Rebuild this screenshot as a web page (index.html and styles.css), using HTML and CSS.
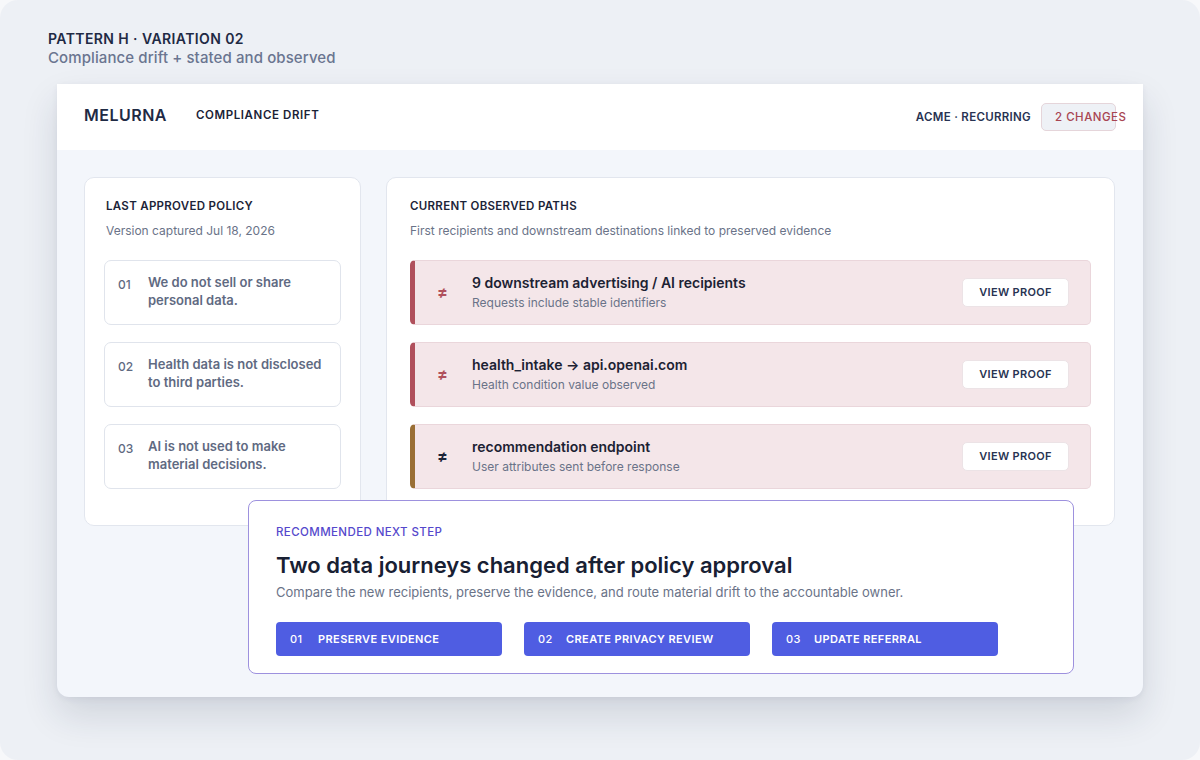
FILE: index.html
```html
<!DOCTYPE html>
<html lang="en">
<head>
<meta charset="utf-8">
<title>Compliance drift</title>
<link rel="stylesheet" href="styles.css">
</head>
<body>
<div class="canvas">
  <div class="intro">
    <div class="intro-title">PATTERN H · VARIATION 02</div>
    <div class="intro-sub">Compliance drift + stated and observed</div>
  </div>
  <div class="frame">
    <header class="topbar">
      <div class="brand">MELURNA</div>
      <div class="section">COMPLIANCE DRIFT</div>
      <div class="spacer"></div>
      <div class="account">ACME · RECURRING</div>
      <div class="badge">2 CHANGES</div>
    </header>
    <main class="body">
      <section class="card policy">
        <h2 class="card-title">LAST APPROVED POLICY</h2>
        <p class="card-sub">Version captured Jul 18, 2026</p>
        <div class="policy-list">
          <div class="policy-item"><span class="num">01</span><span class="ptext">We do not sell or share personal data.</span></div>
          <div class="policy-item"><span class="num">02</span><span class="ptext">Health data is not disclosed to third parties.</span></div>
          <div class="policy-item"><span class="num">03</span><span class="ptext">AI is not used to make material decisions.</span></div>
        </div>
      </section>
      <section class="card paths">
        <h2 class="card-title">CURRENT OBSERVED PATHS</h2>
        <p class="card-sub">First recipients and downstream destinations linked to preserved evidence</p>
        <div class="path-list">
          <div class="path red">
            <span class="neq">≠</span>
            <div class="path-text">
              <div class="path-title">9 downstream advertising / AI recipients</div>
              <div class="path-sub">Requests include stable identifiers</div>
            </div>
            <button class="proof">VIEW PROOF</button>
          </div>
          <div class="path red">
            <span class="neq">≠</span>
            <div class="path-text">
              <div class="path-title">health_intake → api.openai.com</div>
              <div class="path-sub">Health condition value observed</div>
            </div>
            <button class="proof">VIEW PROOF</button>
          </div>
          <div class="path amber">
            <span class="neq">≠</span>
            <div class="path-text">
              <div class="path-title">recommendation endpoint</div>
              <div class="path-sub">User attributes sent before response</div>
            </div>
            <button class="proof">VIEW PROOF</button>
          </div>
        </div>
      </section>
      <section class="next">
        <div class="next-label">RECOMMENDED NEXT STEP</div>
        <h1 class="next-title">Two data journeys changed after policy approval</h1>
        <p class="next-sub">Compare the new recipients, preserve the evidence, and route material drift to the accountable owner.</p>
        <div class="actions">
          <button class="action"><span class="anum">01</span>PRESERVE EVIDENCE</button>
          <button class="action"><span class="anum">02</span>CREATE PRIVACY REVIEW</button>
          <button class="action"><span class="anum">03</span>UPDATE REFERRAL</button>
        </div>
      </section>
    </main>
  </div>
</div>
</body>
</html>
```
FILE: styles.css
```css
* { box-sizing: border-box; }
html, body { margin: 0; padding: 0; }
body {
  background: #f7f8fa;
  font-family: Inter, "Noto Sans", "Liberation Sans", sans-serif;
  color: #1e2a44;
}
.canvas {
  width: 1200px;
  height: 760px;
  background: #edf0f5;
  border-radius: 18px;
  padding: 30px 57px 0 57px;
  overflow: hidden;
}
.intro { margin-left: -9px; }
.intro-title {
  font-size: 14px;
  font-weight: 600;
  letter-spacing: 0.4px;
  color: #1f2a44;
  line-height: 18px;
}
.intro-sub {
  font-size: 15px;
  font-weight: 500;
  letter-spacing: 0.1px;
  color: #6a7590;
  line-height: 20px;
}
.frame {
  margin-top: 16px;
  width: 1086px;
  height: 613px;
  background: #f3f6fb;
  border-radius: 2px 2px 12px 12px;
  box-shadow: 0 18px 36px rgba(30, 40, 70, 0.14), 0 2px 6px rgba(30, 40, 70, 0.06);
  display: flex;
  flex-direction: column;
}
.topbar {
  height: 66px;
  background: #ffffff;
  display: flex;
  align-items: center;
  padding: 0 27px;
}
.brand {
  font-size: 16px;
  font-weight: 600;
  letter-spacing: 0.5px;
  color: #1f2a44;
  margin-top: -4px;
}
.section {
  margin-left: 29px;
  font-size: 11.5px;
  font-weight: 600;
  letter-spacing: 0.6px;
  color: #1a2236;
  margin-top: -4px;
}
.spacer { flex: 1; }
.account {
  font-size: 11.5px;
  font-weight: 600;
  letter-spacing: 0.3px;
  color: #283352;
  margin-top: 0;
}
.badge {
  margin-left: 10px;
  margin-top: 0;
  width: 75px;
  height: 28px;
  background: #eef1f6;
  border: 1px solid #e5d5da;
  border-radius: 5px;
  padding-left: 13px;
  font-size: 11.5px;
  font-weight: 500;
  letter-spacing: 0.5px;
  line-height: 26px;
  color: #a84552;
  white-space: nowrap;
}
.body {
  position: relative;
  flex: 1;
  display: grid;
  grid-template-columns: 277px 729px;
  column-gap: 25px;
  align-items: start;
  padding: 27px 0 0 27px;
}
.card {
  background: #ffffff;
  border: 1px solid #e2e6ee;
  border-radius: 10px;
  height: 349px;
}
.policy { padding: 21px 19px 0 21px; }
.policy .policy-list { margin-left: -2px; }
.paths { padding: 21px 23px 0 23px; }
.card-title {
  margin: 0;
  font-size: 11.5px;
  font-weight: 600;
  letter-spacing: 0.3px;
  color: #1c2438;
  line-height: 14px;
}
.card-sub {
  margin: 10px 0 0 0;
  font-size: 12px;
  color: #6a7388;
  line-height: 15px;
}
.policy-list {
  margin-top: 22px;
  display: flex;
  flex-direction: column;
  gap: 17px;
}
.policy-item {
  height: 65px;
  border: 1px solid #e0e4ec;
  border-radius: 7px;
  display: flex;
  align-items: flex-start;
  padding: 12px 14px 0 13px;
}
.num {
  width: 30px;
  flex: none;
  font-size: 12px;
  font-weight: 500;
  color: #5f6a82;
  line-height: 18px;
  margin-top: 3px;
}
.ptext {
  font-size: 13px;
  font-weight: 600;
  color: #5f6a82;
  line-height: 18px;
}
.path-list {
  margin-top: 22px;
  display: flex;
  flex-direction: column;
  gap: 17px;
}
.path {
  height: 65px;
  background: #f4e6e9;
  border: 1px solid #ead6db;
  border-left: 5px solid #b0505c;
  border-radius: 5px;
  display: flex;
  align-items: center;
  padding: 0 21px 0 22px;
}
.path.amber { border-left-color: #9a6f35; }
.neq {
  width: 35px;
  flex: none;
  font-size: 16px;
  font-weight: 700;
  color: #b0505c;
  margin-top: -2px;
}
.path.amber .neq { color: #1c2438; }
.path-text { flex: 1; margin-top: -2px; }
.path-title {
  font-size: 14px;
  font-weight: 600;
  color: #1c2233;
  line-height: 18px;
}
.path-sub {
  margin-top: 3px;
  font-size: 12px;
  color: #6a7388;
  line-height: 15px;
}
.proof {
  width: 107px;
  height: 29px;
  background: #ffffff;
  border: 1px solid #ece3e6;
  border-radius: 5px;
  font-family: inherit;
  font-size: 11px;
  font-weight: 600;
  letter-spacing: 0.3px;
  color: #283352;
  margin-top: -1px;
}
.next {
  position: absolute;
  left: 191px;
  top: 350px;
  width: 826px;
  height: 174px;
  background: #ffffff;
  border: 1px solid #9d91de;
  border-radius: 8px;
  padding: 23px 27px 0 27px;
}
.next-label {
  font-size: 11.5px;
  font-weight: 500;
  letter-spacing: 0.4px;
  color: #5548cc;
  line-height: 16px;
}
.next-title {
  margin: 12px 0 0 0;
  font-size: 22px;
  font-weight: 600;
  color: #182033;
  line-height: 26px;
}
.next-sub {
  margin: 6px 0 0 0;
  font-size: 13px;
  color: #6a7388;
  line-height: 16px;
}
.actions {
  margin-top: 22px;
  display: flex;
  gap: 22px;
}
.action {
  width: 226px;
  height: 34px;
  background: #4f5de2;
  border: none;
  border-radius: 4px;
  color: #ffffff;
  font-family: inherit;
  font-size: 11px;
  font-weight: 600;
  letter-spacing: 0.4px;
  text-align: left;
  padding: 0 0 0 14px;
  display: flex;
  align-items: center;
}
.anum { width: 28px; font-weight: 500; }
```
